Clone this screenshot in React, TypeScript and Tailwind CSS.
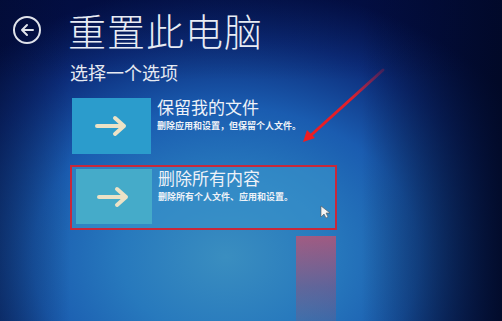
import React from 'react';

function Arrow() {
  return (
    <svg width="34" height="22" viewBox="0 0 34 22">
      <path d="M2 11H29M20 3l9 8-9 8" fill="none" stroke="#ece2c6" strokeWidth="4" strokeLinecap="round" strokeLinejoin="round" />
    </svg>
  );
}

function Option({ title, desc, framed }: { title: string; desc: string; framed?: boolean }) {
  return (
    <div
      className={
        framed
          ? 'flex w-[267px] h-[65px] items-start gap-[6px] border-2 border-[#c8283a] bg-[#3a95cc]/60 pl-[4px] pt-[2px]'
          : 'flex w-[267px] h-[58px] items-start gap-[6px] pl-[2px]'
      }
    >
      <div
        className={
          framed
            ? 'flex w-[76px] h-[55px] items-center justify-center bg-[#45abc9]'
            : 'flex w-[79px] h-[56px] items-center justify-center bg-[#2b9ccc]'
        }
      >
        <Arrow />
      </div>
      <div className="-mt-[4px] flex flex-col">
        <div className="text-[17px] leading-[25px] text-[#eef2f8]">{title}</div>
        <div className="text-[9px] leading-[13px] font-bold text-[#eef2f8]">{desc}</div>
      </div>
    </div>
  );
}

export default function App() {
  return (
    <div
      className="relative w-[502px] h-[321px] overflow-hidden bg-[radial-gradient(ellipse_70%_85%_at_45%_80%,#3a8ec0_0%,#2779bd_30%,#1a5cb0_55%,#0c2c7a_80%,#03104a_100%)]"
      style={{ fontFamily: '"Noto Sans CJK SC", "Noto Sans", sans-serif' }}
    >
      <div className="absolute inset-0 bg-[linear-gradient(90deg,rgba(2,10,40,0.4)_0%,rgba(0,0,0,0)_14%,rgba(0,0,0,0)_72%,rgba(1,8,35,0.9)_100%)]" />
      <div className="absolute inset-0 bg-[linear-gradient(180deg,rgba(2,10,50,0.35)_0%,rgba(0,0,0,0)_25%)]" />
      <div className="relative flex flex-col">
        <div className="flex items-center pt-[8px]">
          <div className="ml-[13px] flex w-[28px] h-[28px] items-center justify-center rounded-full border-2 border-[#dfe2ea]">
            <svg width="16" height="14" viewBox="0 0 16 14">
              <path d="M14 7H3M8 2L3 7l5 5" fill="none" stroke="#dfe2ea" strokeWidth="2" strokeLinecap="round" strokeLinejoin="round" />
            </svg>
          </div>
          <div className="ml-[27px] text-[38px] leading-[44px] font-light text-[#e8ecf4] tracking-[1px]">重置此电脑</div>
        </div>
        <div className="ml-[70px] mt-[8px] text-[18px] leading-[24px] text-[#e6eaf2]">选择一个选项</div>
        <div className="ml-[70px] mt-[14px] flex flex-col gap-[9px]">
          <Option title="保留我的文件" desc="删除应用和设置，但保留个人文件。" />
          <Option title="删除所有内容" desc="删除所有个人文件、应用和设置。" framed />
        </div>
      </div>

      {/* red annotation arrow */}
      <svg className="absolute left-0 top-0" width="502" height="321">
        <defs>
          <linearGradient id="ar" x1="383" y1="70" x2="305" y2="141" gradientUnits="userSpaceOnUse">
            <stop offset="0" stopColor="#c01a3a" stopOpacity="0.3" />
            <stop offset="0.4" stopColor="#e0202a" />
            <stop offset="1" stopColor="#ee1c20" />
          </linearGradient>
        </defs>
        <path d="M383 70L309 137" stroke="url(#ar)" strokeWidth="3" strokeLinecap="round" />
        <path d="M303 142l4-12 8 8z" fill="#ee1c20" />
        {/* cursor */}
        <path d="M321 206v11l3-3 2 4 2-1-2-4h4z" fill="#f4f4f4" stroke="#555" strokeWidth="0.6" />
      </svg>

      {/* pink block */}
      <div className="absolute left-[296px] top-[236px] w-[40px] h-[85px] bg-[linear-gradient(180deg,rgba(200,80,110,0.75)_0%,rgba(150,80,120,0.5)_60%,rgba(120,90,130,0.3)_100%)]" />
    </div>
  );
}
